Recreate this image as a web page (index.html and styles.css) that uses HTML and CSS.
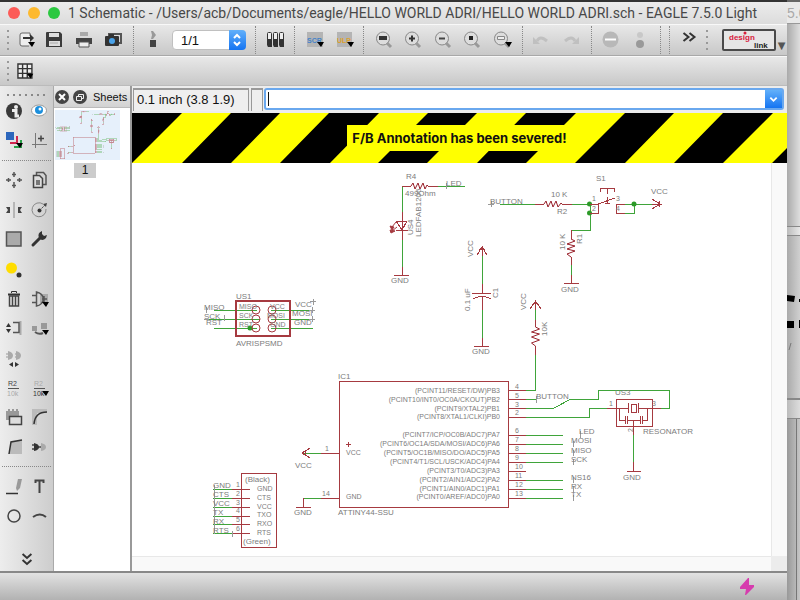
FILE: index.html
```html
<!DOCTYPE html>
<html lang="en">
<head>
<meta charset="utf-8">
<title>1 Schematic - EAGLE 7.5.0 Light</title>
<link rel="stylesheet" href="styles.css">
</head>
<body>
<div class="desktop">
<div class="window">
  <header class="titlebar">
    <button class="light close" aria-label="Close"></button>
    <button class="light minimise" aria-label="Minimise"></button>
    <button class="light maximise" aria-label="Zoom"></button>
    <h1>1 Schematic - /Users/acb/Documents/eagle/HELLO WORLD ADRI/HELLO WORLD ADRI.sch - EAGLE 7.5.0 Light</h1>
  </header>

  <div class="toolbar" role="toolbar" aria-label="Actions">
    <i class="grip"></i>
    <button aria-label="Open"><svg viewBox="9 25 30 30"><path d="M30 36v-3h-8q-2 0-2 2v9q0 2 2 2h7" fill="#eee" stroke="#666"/><path d="M23 37h7v-3l4 4-4 4v-3h-7z" fill="#333"/><path d="M28 42h7l-3 5z"/></svg></button>
    <button aria-label="Save"><svg viewBox="39 25 30 30"><path d="M46 33q0-1 1-1h13l2 2v13H46z" fill="#3b3b3b"/><path d="M49 33h10v4H49zM49 41h11v5H49z" fill="#ddd"/><path d="M50 43h8" stroke="#aaa"/></svg></button>
    <button aria-label="Print"><svg viewBox="69 25 30 30"><path d="M80 32h8v4h-8z" fill="#aaa"/><path d="M76 38h16v6H76z" fill="#444"/><path d="M79 42h10v5H79z" fill="#eee" stroke="#555"/></svg></button>
    <button aria-label="CAM processor"><svg viewBox="99 25 30 30"><path d="M109 36v-2h12v9h-2" fill="none" stroke="#555" stroke-width="2"/><rect x="105" y="36" width="14" height="10" rx="1" fill="#333"/><path d="M109 34h5v2h-5z" fill="#333"/><circle cx="112" cy="41" r="3" fill="#4aa3ea"/></svg></button>
    <i class="divider"></i>
    <button aria-label="Switch to board"><svg viewBox="138 25 30 30"><path d="M151 31h2l3 4-3 4h-2l1-4z" fill="#999"/><path d="M150 40h6v7h-6z" fill="#444"/></svg></button>
    <span class="sheet-picker">
      <select aria-label="Sheet"><option>1/1</option></select>
      <svg viewBox="0 0 17 20" aria-hidden="true"><path d="M5 8l3-3 3 3M5 12l3 3 3-3" fill="none" stroke="#fff" stroke-width="2"/></svg>
    </span>
    <i class="divider"></i>
    <button aria-label="Library"><svg viewBox="260 25 30 30"><g fill="#eee" stroke="#333"><rect x="267.500" y="32.500" width="4" height="14" rx="1"/><rect x="273.500" y="32.500" width="4" height="14" rx="1"/><rect x="279.500" y="32.500" width="4" height="14" rx="1"/></g><path d="M268 39h4v8h-4zM274 39h4v8h-4zM280 39h4v8h-4z" fill="#333"/></svg></button>
    <i class="divider"></i>
    <button aria-label="Run script"><svg viewBox="299 25 30 30"><path d="M307 32h16v15h-16z" fill="#b4b4b4"/><text x="307" y="43" class="chip" fill="#4482c8">SCR</text><path d="M317 42h7l-3 5z"/></svg></button>
    <button aria-label="Run ULP"><svg viewBox="329 25 30 30"><path d="M337 32h15v15h-15z" fill="#b4b4b4"/><text x="337" y="43" class="chip" fill="#dda02c">ULP</text><path d="M347 42h7l-3 5z"/></svg></button>
    <i class="divider"></i>
    <button aria-label="Zoom to fit"><svg viewBox="368 25 30 30"><g class="lens"><circle cx="383" cy="38.500" r="6.500"/><path d="M387 43l4 4"/></g><path d="M379 36h8v4h-8z" fill="#333"/></svg></button>
    <button aria-label="Zoom in"><svg viewBox="398 25 30 30"><g class="lens"><circle cx="412" cy="38.500" r="6.500"/><path d="M416 43l4 4"/></g><path d="M409 38.500h6M412 35.500v6" stroke="#333" stroke-width="2"/></svg></button>
    <button aria-label="Zoom out"><svg viewBox="428 25 30 30"><g class="lens"><circle cx="442" cy="38.500" r="6.500"/><path d="M446 43l4 4"/></g><path d="M439 38.500h6" stroke="#444" stroke-width="2"/></svg></button>
    <button aria-label="Redraw"><svg viewBox="458 25 30 30"><g class="lens"><circle cx="471" cy="38.500" r="6.500"/><path d="M475 43l4 4"/></g><path d="M469 36h4v4h-4z" fill="#222"/></svg></button>
    <button aria-label="Zoom select"><svg viewBox="488 25 30 30"><g class="lens"><circle cx="501" cy="38.500" r="6.500"/><path d="M505 43l4 4"/></g><path d="M497.500 36.500h7v3h-7z" fill="#eee" stroke="#888"/><path d="M505 42h7l-3 5z"/></svg></button>
    <i class="divider"></i>
    <button aria-label="Undo" disabled><svg viewBox="527 25 30 30"><path d="M537 41q3-6 10 0" fill="none" stroke="#c0c0c0" stroke-width="3"/><path d="M533 37v7h7z" fill="#c0c0c0"/></svg></button>
    <button aria-label="Redo" disabled><svg viewBox="557 25 30 30"><path d="M565 41q7-6 10 0" fill="none" stroke="#c0c0c0" stroke-width="3"/><path d="M579 37v7h-7z" fill="#c0c0c0"/></svg></button>
    <i class="divider"></i>
    <button aria-label="Cancel" disabled><svg viewBox="596 25 30 30"><circle cx="610.500" cy="39.500" r="8" fill="#b8b8b8"/><path d="M605 39.500h11" stroke="#fff" stroke-width="2"/></svg></button>
    <button aria-label="Go" disabled><svg viewBox="626 25 30 30"><circle cx="640" cy="35" r="3" fill="#c8c8c8"/><circle cx="640" cy="44" r="4" fill="#999"/></svg></button>
    <i class="divider"></i>
    <i class="divider"></i>
    <button aria-label="More"><svg viewBox="674 25 30 30"><path d="M683.500 33l5 4-5 4M689.500 33l5 4-5 4" fill="none" stroke="#333" stroke-width="2"/></svg></button>
    <i class="grip"></i>
    <button class="design-link" aria-label="design link"><svg viewBox="724 31 50 18"><circle cx="745" cy="33" r="1.500" fill="#d8203c"/><text x="729" y="40" fill="#d8203c">design</text><text x="754" y="48" fill="#222">link</text></svg></button>
    <span class="tail">▼</span>
  </div>

  <div class="toolbar second" role="toolbar" aria-label="Parameters">
    <i class="grip"></i>
    <button aria-label="Grid"><svg viewBox="9 56 30 30"><path d="M17 63.500h16v15H17z" fill="#eee"/><path d="M17.500 63.500h15v15h-15zM17.500 68.500h15M17.500 73.500h15M22.500 63.500v15M27.500 63.500v15" fill="none" stroke="#333" stroke-width="1.500"/><path d="M27 74h7l-3 5z"/></svg></button>
  </div>

  <main class="work">
    <nav class="palette" aria-label="Commands">
      <i class="dots"></i>
      <div class="group">
        <button aria-label="Info"><svg viewBox="0 1 27 28"><circle cx="14" cy="15" r="8" fill="#3a3a3a"/><circle cx="16" cy="11" r="2" fill="#eee"/><path d="M12 14.500h4V20h3" fill="none" stroke="#eee" stroke-width="3"/></svg></button>
        <button aria-label="Show"><svg viewBox="0 1 27 28"><ellipse cx="12" cy="14.500" rx="7.500" ry="5.500" fill="#fff" stroke="#999"/><circle cx="12" cy="14" r="4" fill="#1c8fdc"/><circle cx="13" cy="13" r="1.500" fill="#fff"/></svg></button>
        <button aria-label="Display"><svg viewBox="0 1 27 28"><path d="M6 6h8v8H6z" fill="#2c66bc"/><path d="M17 10v7h-7" fill="none" stroke="#d02850" stroke-width="2"/><path d="M21 14v7h-7" fill="none" stroke="#28a048" stroke-width="2"/><path d="M16 17h7l-3 5z"/></svg></button>
        <button aria-label="Mark"><svg viewBox="0 1 27 28"><path d="M8.500 7v15M5 18.500h15" stroke="#777"/><path d="M11 12.500h6M14 9.500v6" stroke="#444" stroke-width="1.500"/></svg></button>
      </div>
      <i class="rule"></i>
      <div class="group long">
        <button aria-label="Move"><svg viewBox="0 1 27 28"><path d="M14 7v5M14 17v6M6 15h5M17 15h5M12 9.500h4M12 20.500h4M8.500 13v4M19.500 13v4" stroke="#555" stroke-width="1.500"/></svg></button>
        <button aria-label="Copy"><svg viewBox="0 1 27 28"><path d="M9.500 10V7.500h7l2.500 3v9h-3" fill="none" stroke="#555" stroke-width="1.500"/><path d="M6.500 10.500h6l3 3v9h-9z" fill="#ddd" stroke="#444" stroke-width="1.500"/><path d="M9 15h4v5H9z" fill="#777"/></svg></button>
        <button aria-label="Mirror"><svg viewBox="0 1 27 28"><path d="M14 7v16" stroke="#888"/><path d="M6 12h4v6H6l2-3zM22 12h-4v6h4l-2-3z" fill="#444"/></svg></button>
        <button aria-label="Rotate"><svg viewBox="0 1 27 28"><path d="M16 9a7 7 0 1 0 3 5" fill="none" stroke="#888"/><circle cx="12.500" cy="15.500" r="2" fill="#333"/><path d="M13 15l6-6" stroke="#444" stroke-dasharray="2 1"/><path d="M16 9l4-1-1 4z" fill="#444"/></svg></button>
        <button aria-label="Group"><svg viewBox="0 1 27 28"><path d="M6.500 8h14.500v14H6.500z" fill="#aaa" stroke="#555" stroke-width="1.500"/></svg></button>
        <button aria-label="Change"><svg viewBox="0 1 27 28"><path d="M6 21l7-7" stroke="#333" stroke-width="3" stroke-linecap="round"/><path d="M15 7q-5 2-3 7 3 4 7 0l1-3-3 1-2-2z" fill="#333"/></svg></button>
        <button aria-label="Paste"><svg viewBox="0 1 27 28"><circle cx="11.500" cy="14" r="5.500" fill="#fd0"/><circle cx="19" cy="21" r="2.500" fill="#333"/></svg></button>
        <span></span>
        <button aria-label="Delete"><svg viewBox="0 1 27 28"><path d="M8 10.500h12" stroke="#333" stroke-width="2"/><path d="M11.500 9V7.500h5V9" fill="none" stroke="#333"/><path d="M9.500 12v10h9V12zM12.500 12v10M15.500 12v10" fill="none" stroke="#444" stroke-width="1.500"/></svg></button>
        <button aria-label="Add"><svg viewBox="0 1 27 28"><path d="M13 10h8v9h-8z" fill="#aaa"/><path d="M5 11.500h4M5 18.500h4M9.500 8v14q6-1 7-7-1-6-7-7zM15 15h5M17 12v6" fill="none" stroke="#555" stroke-width="1.500"/><path d="M15 18h7l-3 5z"/></svg></button>
        <button aria-label="Pin swap"><svg viewBox="0 1 27 28"><path d="M6 14l2.500-4 2.500 4zM6 16l2.500 4 2.500-4z" fill="#333"/><path d="M20.500 8v14" stroke="#aaa" stroke-width="2"/><path d="M13 9.500h6v10h-6" fill="none" stroke="#555" stroke-width="1.500"/></svg></button>
        <button aria-label="Replace"><svg viewBox="0 1 27 28"><path d="M5 13h5v5H5zM14 10h6v6h-6z" fill="#999"/><path d="M8 19q4 3 8 1" fill="none" stroke="#555" stroke-width="2"/><path d="M15 17h7l-3 5z"/></svg></button>
        <button aria-label="Gate swap"><svg viewBox="0 1 27 28"><path d="M6 11h2M6 14h2M15 11h2M15 14h2" stroke="#999"/><path d="M8 8q5 1 5 4.500T8 17zM16 8q5 1 5 4.500T16 17z" fill="#aaa"/><path d="M13 19v5l-4-2.500zM15 19v5l4-2.500z" fill="#333"/></svg></button>
        <span></span>
        <button aria-label="Name"><svg viewBox="0 1 27 28"><text x="8" y="13" class="tiny" fill="#444">R2</text><path d="M8 15.500h11" stroke="#555"/><text x="7" y="23" class="tiny" fill="#aaa">10k</text></svg></button>
        <button aria-label="Value"><svg viewBox="0 1 27 28"><text x="7" y="13" class="tiny" fill="#aaa">R2</text><path d="M7 15.500h11" stroke="#555"/><text x="6" y="23" class="tiny" fill="#333">10k</text><path d="M15 18h7l-3 5z"/></svg></button>
        <button aria-label="Smash"><svg viewBox="0 1 27 28"><path d="M6 9h2V7h2v2h2V7h2v2h2V7h2v2h1v9H6z" fill="#999"/><path d="M9.500 14.500h12v8h-12z" fill="#ddd" stroke="#444" stroke-width="1.500"/></svg></button>
        <button aria-label="Miter"><svg viewBox="0 1 27 28"><path d="M5 7h15v4H10v12H5z" fill="#bbb"/><path d="M7 22q1-12 13-12" fill="none" stroke="#333" stroke-width="1.500"/></svg></button>
        <button aria-label="Split"><svg viewBox="0 1 27 28"><path d="M9 22l2-12 11-2v14z" fill="#bbb"/><path d="M9 22l2-12 11-2" fill="none" stroke="#333" stroke-width="1.500"/></svg></button>
        <button aria-label="Invoke"><svg viewBox="0 1 27 28"><path d="M5 13h2M5 17h2M10 15h5" stroke="#444" stroke-width="1.500"/><path d="M7 11q5 1 5 4t-5 4z" fill="#333"/><path d="M14 11q5 1 5 4t-5 4z" fill="#aaa"/></svg></button>
      </div>
      <i class="rule"></i>
      <div class="group">
        <button aria-label="Wire"><svg viewBox="0 1 27 28"><path d="M6 22.500h12" stroke="#333" stroke-width="1.500"/><path d="M18 8h4l-2 9-3 3-1-3z" fill="#999"/></svg></button>
        <button aria-label="Text"><svg viewBox="0 1 27 28"><path d="M8.500 12V9.500h8V12M12.500 10v12" fill="none" stroke="#444" stroke-width="2"/></svg></button>
        <button aria-label="Circle"><svg viewBox="0 1 27 28"><circle cx="14" cy="15" r="6" fill="none" stroke="#444" stroke-width="1.500"/></svg></button>
        <button aria-label="Arc"><svg viewBox="0 1 27 28"><path d="M6 16q7-5 13 0" fill="none" stroke="#444" stroke-width="2"/></svg></button>
      </div>
      <button class="more" aria-label="More commands"><svg viewBox="0 0 54 24"><path d="M23 7l4.500 4L32 7M23 13l4.500 4 4.500-4" fill="none" stroke="#333" stroke-width="2"/></svg></button>
    </nav>

    <aside class="sheets">
      <header>
        <button aria-label="Close sheets"><svg viewBox="0 0 14 14"><circle cx="7" cy="7" r="7" fill="#444"/><path d="M4 4l6 6M10 4l-6 6" stroke="#fff" stroke-width="2"/></svg></button>
        <button aria-label="Detach sheets"><svg viewBox="0 0 14 14"><circle cx="7" cy="7" r="7" fill="#444"/><path d="M5.500 6V4.500h5v4H9M3.500 6.500h5v4h-5z" fill="none" stroke="#eee"/></svg></button>
        <h2>Sheets</h2>
      </header>
      <figure>
        <svg class="thumb" viewBox="55 110 65 50" aria-hidden="true"><use href="#wiring" transform="translate(29 87.500) scale(.13)"/></svg>
        <figcaption>1</figcaption>
      </figure>
    </aside>

    <section class="editor">
      <div class="command-row">
        <output class="coords">0.1 inch (3.8 1.9)</output>
        <span class="gap-box"></span>
        <div class="command">
          <input type="text" aria-label="Command">
          <button aria-label="Command history"><svg viewBox="0 0 17 20"><path d="M5 8.500l3.500 3.500L12 8.500" fill="none" stroke="#fff" stroke-width="2"/></svg></button>
        </div>
      </div>
      <div class="banner">
        <svg class="stripes" viewBox="0 0 655 50" preserveAspectRatio="xMinYMin slice" aria-hidden="true"><path d="M0 0H50L0 50zM99 0h49L99 50H50zM197 0h50l-49 50h-50zM296 0h49l-50 50h-49zM394 0h50l-50 50h-49zM493 0h49l-49 50h-50zM591 0h50l-50 50h-49zM690 0h49l-49 50h-50z"/></svg>
        <strong>F/B Annotation has been severed!</strong>
      </div>
      <div class="canvas">
        <svg class="schematic" viewBox="132 163 639 393" preserveAspectRatio="xMinYMin meet" role="img" aria-label="Schematic sheet">
          <g id="wiring">
            <g class="net">
              <path d="M402 186v26M402 240v27M438 186h27"/>
              <path d="M500 204h35M572 204h18v26h-19M571 265v10M625 204h27M625 213h9v-9"/>
              <path d="M482 256v28M482 310v28M535.500 310v10M535.500 355v35.500H526"/>
              <path d="M526 399h10M526 408h28l17-9h27.500v-8.500h71V408H661M526 417h63.500v-9H607M633.500 435v27"/>
              <path d="M526 435h37M526 444h37M526 453h37M526 462h37M526 480h37M526 489h37M526 498h37"/>
              <path d="M303 453h18M303 498h18"/>
              <path d="M214 310h43M204 319h56M214 328h43M271 310h42M271 319h42M271 328h42"/>
              <path d="M213 489h19M213 498h19M213 507h19M213 516h19M213 524h19M213 533h19"/>
            </g>
            <g class="joint"><circle cx="589.500" cy="204" r="2.500"/><circle cx="589.500" cy="213" r="2.500"/><circle cx="634" cy="204" r="2.500"/><circle cx="250" cy="328" r="2.500"/></g>
            <g class="part">
              <path d="M402 186h9M428 186h10M402 212v28M396 221h11l-5 9zM396 230.500h12M402 267v8M394 275h15"/>
              <path d="M535 204h9M562 204h10M590 204h8v9h-8M598 204l17-6M600 192v-4h14.500v4M607 188v6M607 197v7M605 203h5"/>
              <path d="M616 204h9M625 213h-9v-9M652 204h10M652 199l8 5-8 5M659 201v6"/>
              <path d="M571 230v9M571 257v8M571 275v9M564 283.500h15"/>
              <path d="M482 246v10M477 255l5-8 5 8M479 249h6M482 284v9M472 293h19M473 299q9-5 18 0M482 297v13M482 338v8M474 346h15"/>
              <path d="M535.500 300v10M530 309l5.500-8 5.500 8M533 303h5M535.500 320v7M535.500 346v9"/>
              <path d="M339 381h169v126H339zM508 390.500h18M508 399h18M508 408h18M508 417h18M508 435h18M508 444h18M508 453h18M508 462h18M508 471h18M508 480h18M508 489h18M508 498h18"/>
              <path d="M321 453h18M310 448l-8 5 8 5M305 451v4M321 498h18M303.500 498v9M296 507h15M346 444h5M348.500 441.500v5"/>
              <path d="M616 399.500h36V426h-36zM607 408h21M628.500 403v10M631 404h5v8h-5zM638.500 403v10M639 408h22M619.500 408v12.500h5M625 416v8M627.500 416v8M628 420.500h12M640 416v8M642.500 416v8M643 420.500h4.500V408M633.500 420v15M633.500 462v9M627 471h14"/>
              <path d="M241 473h35.500v74H241zM232 489h18M232 498h18M232 507h18M232 516h18M232 524h18M232 533h18"/>
              <path class="thick" d="M236 301h54v35h-54z"/>
              <g class="smooth">
                <circle cx="256" cy="310" r="4"/><circle cx="256" cy="319" r="4"/><circle cx="256" cy="328" r="4"/><circle cx="272" cy="310" r="4"/><circle cx="272" cy="319" r="4"/><circle cx="272" cy="328" r="4"/>
                <path class="coil" d="M411 186l2-3 2 6 3-6 2 6 3-6 2 6 2-4 1 1M544 204l2-3 2 6 3-6 2 6 3-6 2 6 3-4 1 1"/>
                <path class="coil" d="M571 239l4 2-8 3 8 2-8 3 8 2-8 3 4 3M535.500 327l4 2-8 3 8 2-8 3 8 3-8 3 4 3"/>
                <path class="solid" d="M390 226l4 1-2 3zM390 230l5 1-4 2z"/>
                <path d="M396 222l-4 5M397 227l-5 4"/>
              </g>
            </g>
            <g class="origin"><path d="M488 204h6M491 201v6M446 183v6M536 396v7M310 301.500h6M313 298.500v6M309 310h6M312 307v6M309 319h6M312 316v6M206 307v6M209 319h-5M224 315v6M214 485v49M232 531v6M580 431v7M573 441v6M573 450v6M573 459v6M573 477v6M573 486v6M573 495v6"/></g>
          </g>
          <g class="label">
            <text x="406" y="179">R4</text><text x="446" y="186">LED</text><text x="405" y="196">499Ohm</text><text x="391" y="283">GND</text>
            <text transform="translate(421 237) rotate(-90)">LEDFAB1206</text><text transform="translate(413 235) rotate(-90)">US4</text>
            <text x="490" y="204">BUTTON</text><text x="551" y="197">10 K</text><text x="557" y="214">R2</text><text x="596" y="181">S1</text><text x="651" y="194">VCC</text><text x="561" y="292">GND</text>
            <text transform="translate(565 250) rotate(-90)">10 K</text><text transform="translate(582 244) rotate(-90)">R1</text>
            <text transform="translate(473 257) rotate(-90)">VCC</text><text transform="translate(470 311) rotate(-90)">0.1 uF</text><text transform="translate(498 298) rotate(-90)">C1</text><text x="472" y="354">GND</text>
            <text transform="translate(526 310) rotate(-90)">VCC</text><text transform="translate(547 336) rotate(-90)">10K</text>
            <text x="236" y="299">US1</text><text x="236" y="346">AVRISPSMD</text><text x="204" y="310">MISO</text><text x="204" y="319">SCK</text><text x="206" y="325">RST</text>
            <text x="295" y="307">VCC</text><text x="292" y="316">MOSI</text><text x="294" y="325">GND</text>
            <text x="338" y="379">IC1</text><text x="338" y="515">ATTINY44-SSU</text><text x="295" y="468">VCC</text><text x="294" y="515">GND</text>
            <text x="536" y="399">BUTTON</text><text x="615" y="395">US3</text><text x="643" y="434">RESONATOR</text><text x="623" y="480">GND</text>
            <text x="579" y="434">LED</text><text x="571" y="443">MOSI</text><text x="571" y="453">MISO</text><text x="571" y="462">SCK</text><text x="571" y="480">NS16</text><text x="571" y="489">RX</text><text x="571" y="497">TX</text>
            <text x="213" y="488">GND</text><text x="213" y="497">CTS</text><text x="213" y="506">VCC</text><text x="213" y="515">TX</text><text x="213" y="524">RX</text><text x="213" y="533">RTS</text>
            <text x="245" y="482">(Black)</text><text x="243" y="544">(Green)</text>
          </g>
          <g class="label small">
            <text x="239" y="309">MISO</text><text x="239" y="318">SCK</text><text x="239" y="327">RST</text><text x="270" y="309">VCC</text><text x="267" y="318">MOSI</text><text x="270" y="327">GND</text>
            <text x="257" y="491">GND</text><text x="257" y="500">CTS</text><text x="257" y="509">VCC</text><text x="257" y="517">TXO</text><text x="257" y="526">RXO</text><text x="257" y="535">RTS</text>
            <text x="236" y="487">1</text><text x="236" y="496">2</text><text x="236" y="505">3</text><text x="236" y="513">4</text><text x="236" y="522">5</text><text x="236" y="531">6</text>
            <text x="325" y="451">1</text><text x="322" y="496">14</text><text x="346" y="455">VCC</text><text x="346" y="499">GND</text>
            <text x="592" y="201">1</text><text x="592" y="211">2</text><text x="616" y="201">3</text><text x="616" y="211">4</text><text x="609" y="406">1</text><text x="652" y="406">3</text><text transform="translate(633 432) rotate(-90)">2</text>
            <text x="515" y="389">4</text><text x="515" y="398">5</text><text x="515" y="407">3</text><text x="515" y="415">2</text><text x="515" y="433">6</text><text x="515" y="442">7</text><text x="515" y="451">8</text><text x="515" y="460">9</text><text x="515" y="469">10</text><text x="515" y="478">11</text><text x="515" y="487">12</text><text x="515" y="496">13</text>
            <g class="pins">
              <text x="500" y="393">(PCINT11/RESET/DW)PB3</text><text x="500" y="402">(PCINT10/INT0/OC0A/CKOUT)PB2</text><text x="500" y="411">(PCINT9/XTAL2)PB1</text><text x="500" y="419">(PCINT8/XTAL1/CLKI)PB0</text>
              <text x="500" y="437">(PCINT7/ICP/OC0B/ADC7)PA7</text><text x="500" y="446">(PCINT6/OC1A/SDA/MOSI/ADC6)PA6</text><text x="500" y="455">(PCINT5/OC1B/MISO/DO/ADC5)PA5</text><text x="500" y="464">(PCINT4/T1/SCL/USCK/ADC4)PA4</text><text x="500" y="473">(PCINT3/T0/ADC3)PA3</text><text x="500" y="482">(PCINT2/AIN1/ADC2)PA2</text><text x="500" y="491">(PCINT1/AIN0/ADC1)PA1</text><text x="500" y="499">(PCINT0/AREF/ADC0)PA0</text>
            </g>
          </g>
        </svg>
        <i class="track vertical"></i>
        <i class="track horizontal"></i>
        <i class="corner"></i>
      </div>
    </section>
  </main>

  <footer class="status"><svg viewBox="0 0 14 18" role="img" aria-label="Live update"><path d="M8 0L0 9v2h6l-1 6h1l8-8V7H9V0z" fill="#d63cae"/></svg></footer>
</div>

<div class="behind" aria-hidden="true">
  <span class="behind-title">5.0</span>
  <div class="behind-top"></div>
  <div class="behind-bar"></div>
  <div class="behind-art"><svg viewBox="787 236 13 162"><path d="M787 295l8 1-1 6-7-1zM799 299h1v3h-1zM787 321h7v7h-7zM799 320h1v8h-1z"/><path d="M789 350l2-7" stroke="#777"/></svg></div>
  <div class="behind-foot"></div>
  <div class="behind-edge"></div>
</div>
</div>
</body>
</html>
```
FILE: styles.css
```css
* { box-sizing: border-box; }

body {
  margin: 0;
  font-family: "Liberation Sans", Arial, sans-serif;
  font-size: 13px;
  color: #111;
}

button {
  padding: 0;
  border: 0;
  background: none;
  display: block;
}

svg { display: block; }
i { display: block; flex: none; }
h1, h2, figure { margin: 0; font-weight: normal; }

.desktop {
  display: grid;
  grid-template-columns: minmax(0, 1fr) 13px;
  min-height: 100vh;
  background: #bbb;
}

.window {
  display: flex;
  flex-direction: column;
  border-top: 2px solid #333;
  background: #ddd;
}

/* Title bar */
.titlebar {
  display: flex;
  align-items: center;
  height: 22px;
  padding-left: 8px;
  gap: 8px;
  background: linear-gradient(#ececec, #dcdcdc);
}

.titlebar h1 {
  font-family: Roboto, "Liberation Sans", sans-serif;
  font-size: 14px;
  line-height: 22px;
  color: #484848;
  white-space: nowrap;
}

.light {
  width: 12px;
  height: 12px;
  border-radius: 50%;
  flex: none;
}

.close { background: #fc5b57; }
.minimise { background: #fdb92e; }
.maximise { background: #2bc840; }

/* Toolbars */
.toolbar {
  display: flex;
  align-items: center;
  height: 32px;
  border-top: 1px solid #f8f8f8;
  border-bottom: 1px solid #a8a8a8;
  background: linear-gradient(#e8e8e8, #c8c8c8);
}

.toolbar.second {
  height: 30px;
  border-bottom-color: #bbb;
}

.toolbar > button { flex: none; }
.toolbar > button svg { width: 30px; height: 30px; }
.toolbar.second > button svg { height: 28px; }

.grip {
  width: 2px;
  height: 20px;
  margin: 0 0 0 7px;
  background: repeating-linear-gradient(#999 0 2px, transparent 2px 6px);
}

.toolbar button + .grip { margin: 0 14px 0 2px; }

.divider {
  height: 28px;
  margin: 0 4px;
  border-left: 1px dotted #888;
}

.chip { font-size: 7px; font-weight: bold; }
.tiny { font-size: 7px; }
.lens { fill: #ddd; stroke: #888; stroke-width: 1px; }
.lens path { stroke: #999; stroke-width: 3px; }

.sheet-picker {
  position: relative;
  width: 74px;
  height: 20px;
  margin: 0 5px 0 4px;
  flex: none;
}

.sheet-picker select {
  appearance: none;
  width: 100%;
  height: 100%;
  padding: 0 8px;
  border: 1px solid #c0c0c0;
  border-radius: 4px;
  background: #fff;
  font: 13px "Liberation Sans", Arial, sans-serif;
  color: #111;
}

.sheet-picker svg {
  position: absolute;
  top: 0;
  right: 0;
  width: 17px;
  height: 20px;
  border-radius: 0 4px 4px 0;
  background: linear-gradient(#62b0fa, #1474f2);
  pointer-events: none;
}

.toolbar > .design-link {
  width: 54px;
  height: 22px;
  border: 2px solid #4a4a4a;
  border-radius: 2px;
  background: #e6e6e6;
  font-size: 8px;
  font-weight: bold;
}

.toolbar > .design-link svg { width: 50px; height: 18px; }

.tail {
  align-self: flex-end;
  width: 11px;
  font: 10px/18px "DejaVu Sans", sans-serif;
  text-align: center;
  color: #555;
}

/* Work area */
.work {
  display: grid;
  grid-template-columns: 54px 78px minmax(0, 1fr);
  flex: 1;
  border-bottom: 2px solid #888;
}

.palette {
  display: flex;
  flex-direction: column;
  border-right: 1px solid #aaa;
  background: linear-gradient(90deg, #ededed, #cdcdcd);
}

.palette .dots {
  height: 2px;
  margin: 8px 8px 0 7px;
  background: repeating-linear-gradient(90deg, #888 0 2px, transparent 2px 6px);
}

.group {
  display: grid;
  grid-template-columns: 27px 26px;
  grid-auto-rows: 30px;
}

.group.long { height: 297px; grid-auto-rows: 1fr; }
.group svg { width: 27px; height: 28px; }

.rule {
  margin: 4px 2px;
  border-top: 1px dotted #888;
}

.more { margin-top: auto; }
.more svg { width: 53px; height: 24px; }

.sheets {
  border-right: 2px solid #999;
  background: #fff;
}

.sheets header {
  display: flex;
  align-items: center;
  gap: 4px;
  height: 22px;
  padding-left: 1px;
  border-bottom: 1px solid #bbb;
  background: linear-gradient(#ededed, #d2d2d2);
}

.sheets header svg { width: 14px; height: 14px; }
.sheets h2 { font-size: 11px; margin-left: 2px; }
.sheets figure { padding: 2px 0 0 1px; }

.thumb {
  width: 65px;
  height: 50px;
  background: #e0edfb;
  --wire: 4px;
  opacity: .8;
}

.thumb use { opacity: .8; }

.sheets figcaption {
  width: 22px;
  margin: 3px 0 0 19px;
  background: #ccc;
  font-size: 12px;
  line-height: 15px;
  text-align: center;
}

.editor {
  display: flex;
  flex-direction: column;
  background: #fff;
}

.command-row {
  display: flex;
  height: 27px;
  padding: 2px 3px 2px 1px;
  background: #ececec;
}

.coords, .gap-box {
  border: 1px solid #999;
  border-width: 2px 1px 0 1px;
  background: #efefef;
}

.coords {
  width: 116px;
  padding-left: 3px;
  line-height: 20px;
  white-space: nowrap;
}

.gap-box { width: 12px; margin: 0 1px 0 2px; }

.command {
  position: relative;
  display: flex;
  flex: 1;
  height: 22px;
  border: 2px solid #6aa8ee;
  border-radius: 3px;
  background: #fff;
}

.command::before {
  content: "";
  position: absolute;
  left: 2px;
  top: 2px;
  width: 1px;
  height: 14px;
  background: #111;
}

.command input {
  flex: 1;
  min-width: 0;
  border: 0;
  padding: 0 4px;
  outline: 0;
  background: none;
}

.command button {
  width: 17px;
  background: linear-gradient(#62b0fa, #1474f2);
}

.command button svg { width: 17px; height: 18px; }

.banner {
  display: grid;
  height: 50px;
  background: #ff0;
}

.stripes {
  grid-area: 1 / 1;
  width: 100%;
  height: 50px;
}

.banner strong {
  grid-area: 1 / 1;
  place-self: center;
  position: relative;
  padding: 0 5px;
  background: #ff0;
  font-family: Inter, "Liberation Sans", sans-serif;
  line-height: 26px;
}

.canvas {
  display: grid;
  grid-template-columns: minmax(0, 1fr) 16px;
  grid-template-rows: 1fr 15px;
  flex: 1;
}

.schematic { width: 100%; }
.track { background: #f9f9f9; }
.vertical { border-left: 1px solid #e8e8e8; }
.horizontal { border-top: 1px solid #e8e8e8; }
.corner { background: #ececec; }

/* Schematic drawing */
.net, .part, .origin {
  fill: none;
  stroke-width: var(--wire, 1px);
  shape-rendering: crispEdges;
}

.net { stroke: #3fa43a; }
.part { stroke: #a63a40; }
.origin { stroke: #999; }
.joint { fill: #2c9a28; }
.smooth { shape-rendering: auto; }
.coil { stroke: #98202a; }
.thick { stroke-width: 2px; }
.solid { fill: #a63a40; }
.label { font-size: 8px; fill: #7c7c7c; }
.small { font-size: 7px; }
.pins { text-anchor: end; }

.status {
  display: flex;
  justify-content: flex-end;
  height: 28px;
  padding: 5px 33px 0 0;
  background: linear-gradient(#e2e2e2, #b0b0b0);
}

.status svg { width: 14px; height: 18px; }

/* Window further back */
.behind {
  display: flex;
  flex-direction: column;
  overflow: hidden;
  border-top: 2px solid #666;
  background: linear-gradient(90deg, #999, #c6c6c6);
}

.behind-title {
  height: 22px;
  border-bottom: 1px solid #999;
  background: #e9e9e9;
  font-size: 14px;
  line-height: 22px;
  color: #aaa;
  white-space: nowrap;
}

.behind-top { height: 202px; background: linear-gradient(90deg, #aaa, #dedede); }

.behind-bar {
  height: 10px;
  border: solid #888;
  border-width: 1px 0;
  background: linear-gradient(90deg, #bbb, #e8e8e8);
}

.behind-art { height: 162px; background: linear-gradient(90deg, #aaa, #d0d0d0); }
.behind-art svg { width: 13px; height: 162px; }

.behind-foot {
  height: 21px;
  border: solid #888;
  border-width: 2px 0 1px;
  background: linear-gradient(90deg, #bbb, #ddd);
}

.behind-edge {
  flex: 1;
  margin-right: 3px;
  border-right: 1px solid #777;
}
```
